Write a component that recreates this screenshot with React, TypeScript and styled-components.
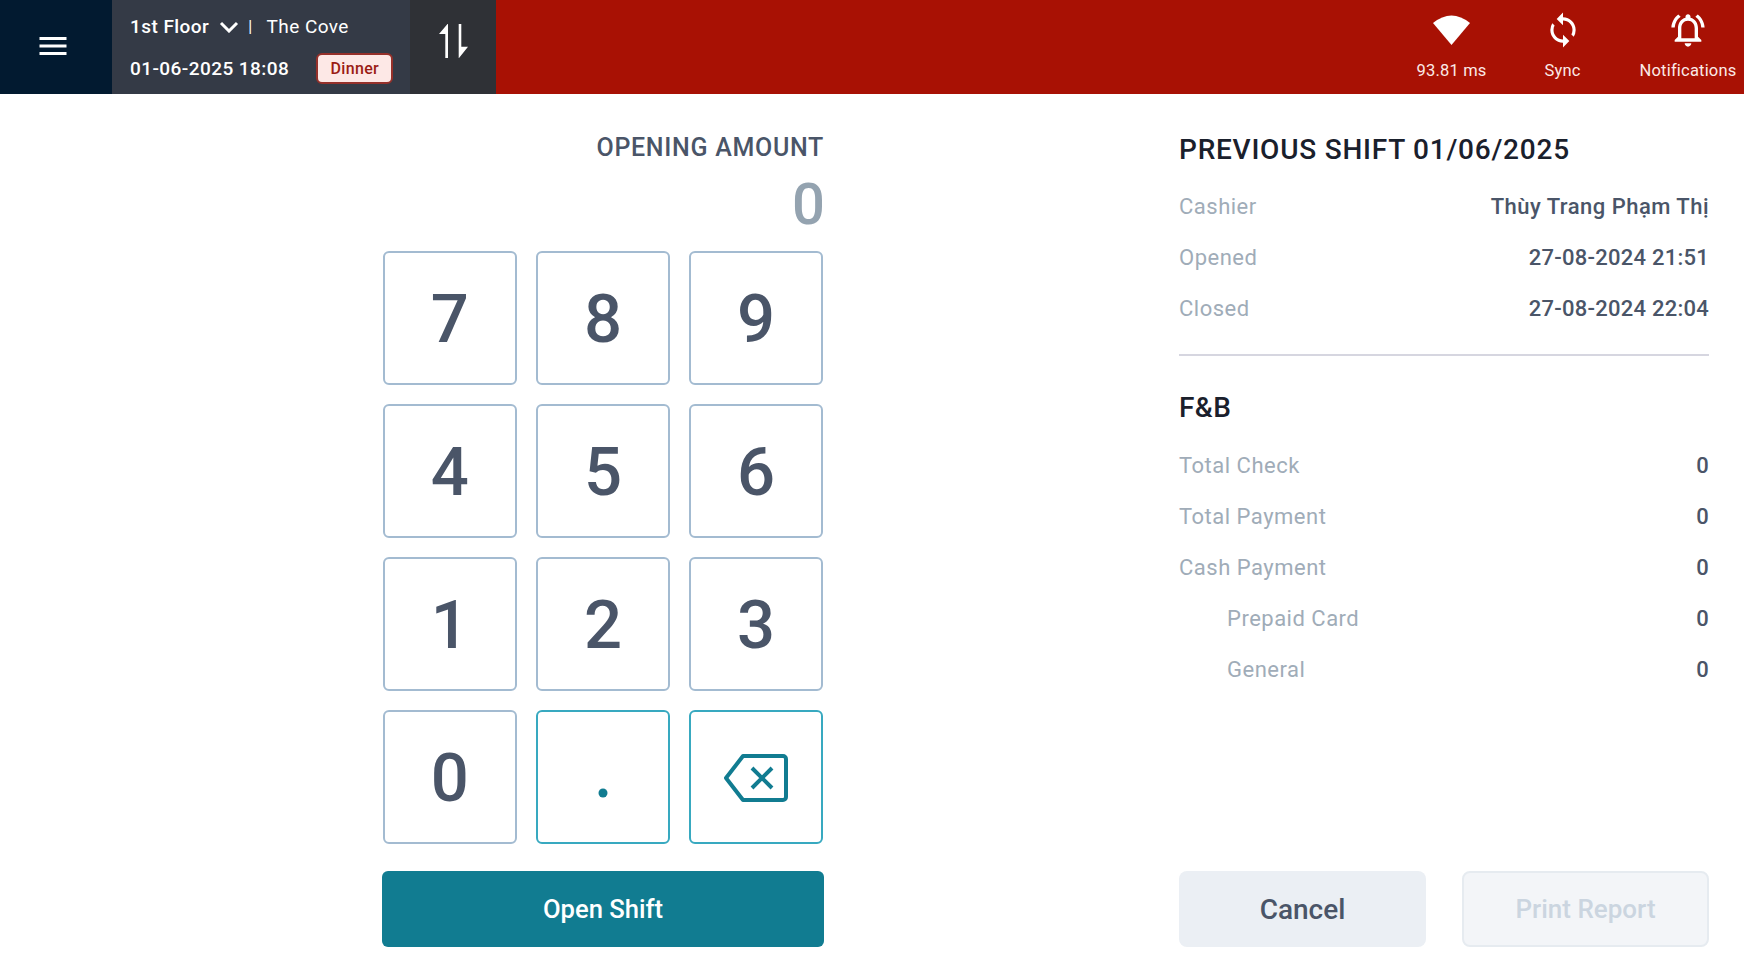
import React from "react";
import styled, { createGlobalStyle } from "styled-components";
import { MdMenu, MdSync, MdOutlineNotificationsActive } from "react-icons/md";

const Global = createGlobalStyle`
  html, body { margin: 0; padding: 0; background: #fff; }
  body { font-family: Roboto, "Liberation Sans", sans-serif; overflow: hidden; }
`;
const Page = styled.div`width:1744px;height:975px;display:flex;flex-direction:column;`;
const Header = styled.header`height:94px;display:flex;background:#a81104;color:#fff;`;
const MenuCell = styled.div`width:112px;background:#021a30;display:flex;align-items:center;justify-content:center;font-size:36px;padding-bottom:2px;box-sizing:border-box;padding-right:6px;`;
const InfoCell = styled.div`width:298px;background:#343a46;padding:16px 0 0 18px;box-sizing:border-box;display:flex;flex-direction:column;gap:15px;`;
const InfoRow = styled.div`display:flex;align-items:center;font-size:19px;line-height:22px;letter-spacing:.44px;`;
const Strong = styled.span`font-weight:500;`;
const Light = styled.span`font-weight:400;`;
const Sep = styled.span`margin:0 14px 0 9px;font-size:16px;`;
const Chevron = styled.svg`width:20px;height:12px;margin-left:10px;`;
const Badge = styled.span`margin-left:27px;width:77px;height:31px;background:#fde8e6;color:#9b1c14;border:2px solid #95302a;border-radius:6px;font-size:16px;font-weight:500;display:flex;align-items:center;justify-content:center;box-sizing:border-box;letter-spacing:.3px;`;
const SwapCell = styled.div`width:86px;background:#2f3136;display:flex;align-items:center;justify-content:center;padding-bottom:12px;box-sizing:border-box;`;
const Spacer = styled.div`flex:1;`;
const Status = styled.div<{ $w: number; $pad?: number }>`width:${p => p.$w}px;padding-left:${p => p.$pad ?? 0}px;display:flex;flex-direction:column;align-items:center;padding-top:11px;box-sizing:border-box;`;
const StatusIcon = styled.div`height:38px;display:flex;align-items:center;justify-content:center;font-size:38px;`;
const BellIcon = styled(MdOutlineNotificationsActive)`font-size:40px;`;
const StatusLabel = styled.div`font-size:16.5px;line-height:20px;margin-top:12px;white-space:nowrap;color:#fbe9e7;letter-spacing:.2px;`;
const Body = styled.main`flex:1;display:flex;`;
const LeftCol = styled.section`margin-left:382px;width:442px;display:flex;flex-direction:column;align-items:stretch;`;
const AmountLabel = styled.div`margin-top:39px;font-size:25px;line-height:30px;font-weight:500;color:#4a5568;text-align:right;letter-spacing:.7px;`;
const AmountValue = styled.div`font-size:58px;line-height:68px;font-weight:500;color:#94a3b0;text-align:right;margin:7px -1px 0 0;`;
const Keypad = styled.div`margin:13px 0 0 1px;display:grid;grid-template-columns:repeat(3,133.67px);grid-auto-rows:134px;column-gap:19.5px;row-gap:19px;`;
const Key = styled.button<{ $accent?: boolean }>`
  border:2px solid ${p => (p.$accent ? "#38a9c0" : "#a3bbd1")};border-radius:6px;background:#fff;padding:2px 0 0;
  color:${p => (p.$accent ? "#117c91" : "#4a5568")};font:500 67px/1 Roboto,sans-serif;
  display:flex;align-items:center;justify-content:center;
`;
const PrimaryBtn = styled.button`margin-top:27px;height:76px;border:0;border-radius:6px;background:#117c91;color:#fff;font:500 25.6px Roboto,sans-serif;`;
const RightCol = styled.section`margin-left:355px;width:530px;display:flex;flex-direction:column;`;
const Title = styled.h2`margin:37px 0 0;font-size:28px;line-height:38px;font-weight:500;color:#1a202c;letter-spacing:.76px;`;
const Rows = styled.div`display:flex;flex-direction:column;margin-top:12px;`;
const Row = styled.div<{ $indent?: boolean }>`height:51px;display:flex;align-items:center;justify-content:space-between;font-size:22px;color:#a0acb8;padding-left:${p => (p.$indent ? "48px" : "0")};letter-spacing:.5px;`;
const Val = styled.span<{ $spread?: boolean }>`font-weight:500;color:#4a5568;letter-spacing:${p => (p.$spread ? ".48px" : ".25px")};`;
const Divider = styled.hr`margin:20px 0 0;border:0;border-top:2px solid #d6d6e0;`;
const SubTitle = styled.h3`margin:34px 0 2px;font-size:28px;line-height:36px;font-weight:500;color:#1a202c;letter-spacing:.4px;`;
const Footer = styled.div`margin-top:auto;margin-bottom:28px;display:flex;justify-content:space-between;`;
const Btn = styled.button<{ $off?: boolean }>`width:247px;height:76px;border-radius:8px;font:500 ${p => (p.$off ? 26 : 28)}px Roboto,sans-serif;
  background:${p => (p.$off ? "#f3f5f8" : "#ebeff4")};color:${p => (p.$off ? "#cbd5e0" : "#4a5568")};border:${p => (p.$off ? "2px solid #e6ebf0" : "0")};`;

const keys = ["7","8","9","4","5","6","1","2","3","0"];

export default function App() {
  return (
    <Page>
      <Global />
      <Header>
        <MenuCell><MdMenu /></MenuCell>
        <InfoCell>
          <InfoRow>
            <Strong>1st Floor</Strong>
            <Chevron viewBox="0 0 20 12"><path d="M2 2l8 8 8-8" fill="none" stroke="#fff" strokeWidth="3" /></Chevron>
            <Sep>|</Sep>
            <Light>The Cove</Light>
          </InfoRow>
          <InfoRow>
            <Strong>01-06-2025 18:08</Strong>
            <Badge>Dinner</Badge>
          </InfoRow>
        </InfoCell>
        <SwapCell>
          <svg width="29" height="34" viewBox="0 0 29 34" fill="#fff">
            <path d="M8.500 0L0 10h6.300v24H9V0z" />
            <path d="M19.700 0h2.600v22.700H29L20 34h-.3z" />
          </svg>
        </SwapCell>
        <Spacer />
        <Status $w={111}>
          <StatusIcon>
            <svg width="37" height="30" viewBox="0 0 37 30" fill="#fff"><path d="M18.500 30L0 8Q18.500-7 37 8z" /></svg>
          </StatusIcon>
          <StatusLabel>93.81 ms</StatusLabel>
        </Status>
        <Status $w={111}><StatusIcon><MdSync /></StatusIcon><StatusLabel>Sync</StatusLabel></Status>
        <Status $w={126} $pad={14}><StatusIcon><BellIcon /></StatusIcon><StatusLabel>Notifications</StatusLabel></Status>
      </Header>
      <Body>
        <LeftCol>
          <AmountLabel>OPENING AMOUNT</AmountLabel>
          <AmountValue>0</AmountValue>
          <Keypad>
            {keys.map(k => <Key key={k}>{k}</Key>)}
            <Key $accent>
              <svg width="12" height="12" viewBox="0 0 12 12" style={{marginTop:30}}><circle cx="6" cy="6" r="4.500" fill="#117c91" /></svg>
            </Key>
            <Key $accent>
              <svg width="66" height="50" viewBox="0 0 66 50" fill="none" stroke="#117c91" strokeWidth="4" strokeLinejoin="round">
                <path d="M20 3H60a3 3 0 0 1 3 3V44a3 3 0 0 1-3 3H20L3 25z" />
                <path d="M29 15l20 20M49 15L29 35" />
              </svg>
            </Key>
          </Keypad>
          <PrimaryBtn>Open Shift</PrimaryBtn>
        </LeftCol>
        <RightCol>
          <Title>PREVIOUS SHIFT 01/06/2025</Title>
          <Rows>
            <Row>Cashier<Val $spread>Thùy Trang Phạm Thị</Val></Row>
            <Row>Opened<Val>27-08-2024 21:51</Val></Row>
            <Row>Closed<Val>27-08-2024 22:04</Val></Row>
          </Rows>
          <Divider />
          <SubTitle>F&amp;B</SubTitle>
          <Rows>
            <Row>Total Check<Val>0</Val></Row>
            <Row>Total Payment<Val>0</Val></Row>
            <Row>Cash Payment<Val>0</Val></Row>
            <Row $indent>Prepaid Card<Val>0</Val></Row>
            <Row $indent>General<Val>0</Val></Row>
          </Rows>
          <Footer><Btn>Cancel</Btn><Btn $off>Print Report</Btn></Footer>
        </RightCol>
      </Body>
    </Page>
  );
}
